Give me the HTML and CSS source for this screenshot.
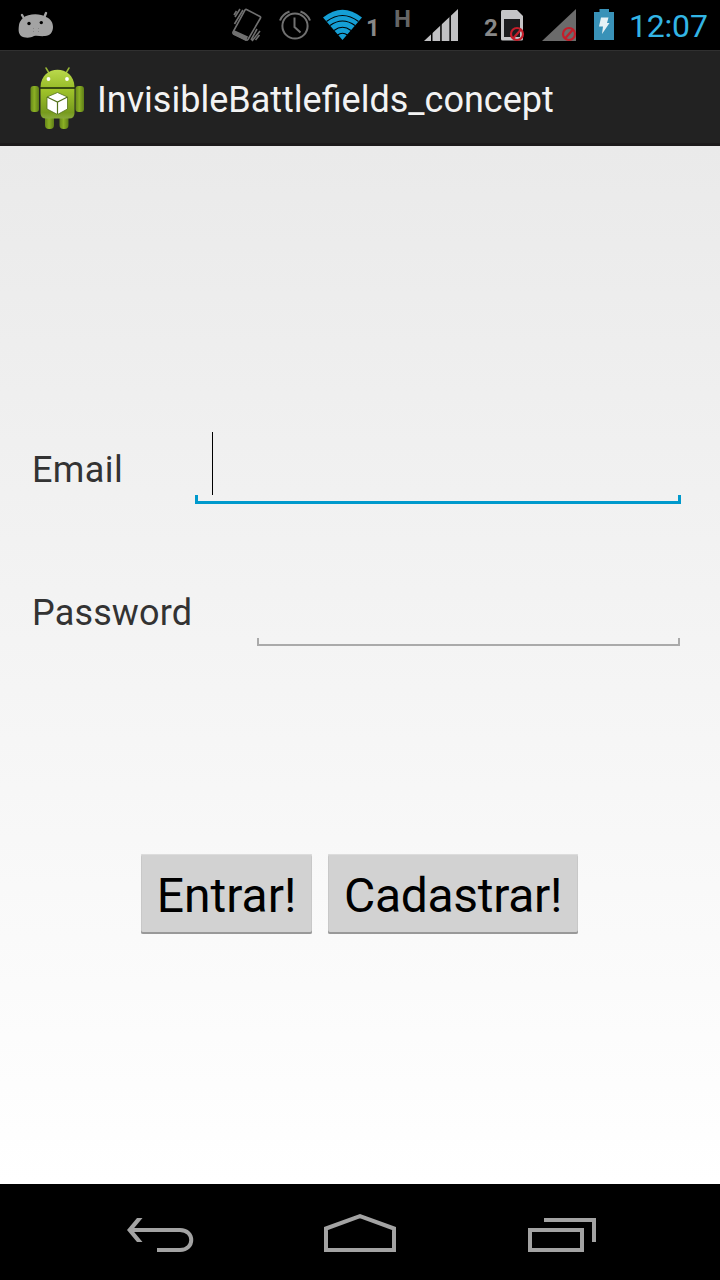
FILE: index.html
```html
<!DOCTYPE html>
<html lang="pt">
<head>
<meta charset="utf-8">
<title>InvisibleBattlefields_concept</title>
<link rel="stylesheet" href="styles.css">
</head>
<body>
<div class="screen">
  <header class="status-bar">
    <svg class="notification" width="38" height="50" viewBox="17 0 38 50">
      <path d="M22 15l3 5M46 13l-2 5" stroke="#a3a3a3" stroke-width="2.400" stroke-linecap="round"/>
      <path fill="#a3a3a3" d="M23 18c5-4.500 17-5 23-1c5 2 7 6 7 10c0 5-3 9-8 9c-4 .5-7-.5-11 0c-4 2.500-10 2-13 0c-3-3-2.500-7-2-11c.3-3 2-5 4-7z"/>
      <circle cx="29" cy="23.500" r="1.700"/><circle cx="41.300" cy="22.600" r="1.700"/>
      <path d="M33 28.500h1M38 28.500h1M33 31.500h1M38 31.500h1" stroke="#858585"/>
    </svg>
    <svg class="vibrate" width="30" height="50" viewBox="232 0 30 50" fill="none" stroke="#707070" stroke-width="1.600">
      <path d="M246.500 9.500L260 16.500Q261 17 260.500 18L248 39.500Q247.500 40.500 246.500 40L233.500 34Q232.600 33 233 32L245 10Q245.700 9.200 246.500 9.500z"/>
      <path d="M234 31l13 6l-1.500 3L234 34z" fill="#707070"/>
      <path d="M240 9l-5 8M243 10l-8.500 14M236.500 11l-2.500 4M260 31l-8 10M259.500 35l-4 5M257 29l-6 11"/>
    </svg>
    <svg class="alarm" width="32" height="50" viewBox="279 0 32 50" fill="none" stroke="#707070" stroke-width="2">
      <circle cx="295" cy="26" r="12.600"/>
      <path d="M294.500 17.500V27l6 5.500M280 20.500Q282 14.500 289.500 11.500M310 20.500Q308 14.500 300.500 11.500"/>
    </svg>
    <svg class="wifi" width="40" height="50" viewBox="323 0 40 50">
      <path fill="#159fd5" d="M323 17.500Q342.500 2 362 17.500L342.500 40z"/>
      <g fill="none" stroke="#000" stroke-width="1.100"><path d="M326.500 21.500q16-12 32 0M330 25.500q12.500-9 25 0M334 30.500q8.500-6.500 17 0M337.500 35q5-3.500 10 0"/></g>
    </svg>
    <span class="slot">1</span>
    <span class="network">H</span>
    <svg class="signal" width="35" height="50" viewBox="424 0 35 50">
      <path fill="#c1c1c3" d="M424 41L458 9V41z"/>
      <path fill="#000" d="M431 9h1.500v33H431zM440.200 9h1.500v33h-1.500zM449.400 9h1.500v33h-1.500z"/>
    </svg>
    <span class="slot slot-two">2</span>
    <svg class="sim" width="24" height="50" viewBox="501 0 24 50">
      <path fill="#c5c5c7" d="M502.500 10H517l6 6v23q0 1.500-1.500 1.500h-19q-1.500 0-1.500-1.500V11.500q0-1.500 1.500-1.500z"/>
      <path fill="#1d1d1f" d="M504 19h16v18h-16z"/>
      <g fill="none" stroke="#c51d2a" stroke-width="2.200"><circle cx="517" cy="34" r="6"/><path d="M513 38.500l8-9"/></g>
    </svg>
    <svg class="no-signal" width="35" height="50" viewBox="542 0 35 50">
      <path fill="#6b6b6b" d="M542 41L576 9V41z"/>
      <g fill="none" stroke="#c51d2a" stroke-width="2.200"><circle cx="569" cy="34" r="6"/><path d="M565 38.500l8-9"/></g>
    </svg>
    <svg class="battery" width="20" height="50" viewBox="594 0 20 50">
      <path fill="#3992b8" d="M594 12h5.500V9h9.500v3h5v28h-20z"/>
      <path fill="#e7f2f6" d="M601 17.500h7.500l-1.500 5.500h2.500L602 34l1-7.500h-4z"/>
    </svg>
    <time class="clock">12:07</time>
  </header>

  <div class="action-bar">
    <svg class="app-icon" width="56" height="64" viewBox="29 66 56 64">
      <defs>
        <linearGradient id="body" x2="0" y2="1"><stop stop-color="#a1c52b"/><stop offset=".8" stop-color="#779b1d"/><stop offset="1" stop-color="#89a93c"/></linearGradient>
        <linearGradient id="limb"><stop stop-color="#668719"/><stop offset=".45" stop-color="#8bb024"/><stop offset="1" stop-color="#5e7d17"/></linearGradient>
        <linearGradient id="head" x2="0" y2="1"><stop stop-color="#bad94c"/><stop offset="1" stop-color="#9abf2b"/></linearGradient>
      </defs>
      <path d="M46 68l3 5M69 68l-3 5" stroke="#98b736" stroke-width="1.500" stroke-linecap="round"/>
      <g fill="url(#limb)"><rect x="30.500" y="86" width="8.500" height="26" rx="3"/><rect x="75.500" y="86" width="8.500" height="26" rx="3"/><rect x="45" y="110" width="9" height="19" rx="4"/><rect x="59.500" y="110" width="9" height="19" rx="4"/></g>
      <path fill="url(#head)" d="M40.500 87C41 64 74 64 74.500 87z"/>
      <path fill="url(#body)" d="M40.500 89h34v24q0 5.500-5.500 5.500H46q-5.500 0-5.500-5.500z"/>
      <path d="M40.500 88h34" stroke="#40580e" stroke-width="1.400"/>
      <circle cx="48.500" cy="79" r="1.900" fill="#fff"/><circle cx="67" cy="79" r="1.900" fill="#fff"/>
      <path fill="#fff" stroke="#53711a" stroke-width=".8" d="M57.500 92.500l10 4.500v12l-10 5.500l-10.500-5.500V97z"/>
      <path fill="none" stroke="#53711a" stroke-width="1.200" d="M47 97l10.500 5l10-5M57.500 102v12"/>
    </svg>
    <h1 class="title">InvisibleBattlefields_concept</h1>
  </div>

  <main class="content">
    <div class="row">
      <label class="label email">Email</label>
      <div class="field focused"><span class="cursor"></span><span class="underline"></span></div>
    </div>
    <div class="row">
      <label class="label secret">Password</label>
      <div class="field password"><span class="underline"></span></div>
    </div>
    <div class="actions">
      <button class="button enter">Entrar!</button>
      <button class="button register">Cadastrar!</button>
    </div>
  </main>

  <nav class="nav-bar">
    <svg width="68" height="96" viewBox="126 1184 68 96" fill="none" stroke="#a3a3a3" stroke-width="4"><path d="M130 1230H180C195 1230 195 1250 180 1250H157"/><path d="M142.500 1218h-5.500L127 1230l10 12h5.500L132.500 1230z" fill="#a3a3a3" stroke="none"/></svg>
    <svg width="72" height="96" viewBox="324 1184 72 96" fill="none" stroke="#a3a3a3" stroke-width="4"><path d="M326 1250V1228.500L360 1216.200L394 1228.500V1250z"/></svg>
    <svg width="68" height="96" viewBox="528 1184 68 96" fill="none" stroke="#a3a3a3" stroke-width="4"><path d="M530 1230h52v20h-52zM544 1220h50v22"/></svg>
  </nav>
</div>
</body>
</html>
```
FILE: styles.css
```css
* { box-sizing: border-box; }
body { margin: 0; font-family: Roboto, "Noto Sans", sans-serif; }
svg { display: block; flex: none; }
.screen { width: 720px; height: 1280px; display: flex; flex-direction: column; background: #000; overflow: hidden; }

.status-bar { height: 50px; flex: none; display: flex; background: #000; }
.notification { margin-left: 17px; }
.vibrate { margin-left: 177px; }
.alarm { margin-left: 17px; }
.wifi { margin-left: 12px; }
.slot { width: 14px; margin-left: 3px; padding-top: 14px; font-size: 24px; line-height: 28px; font-weight: 700; color: #888; }
.network { width: 18px; margin-left: 14px; padding-top: 5px; font-size: 24px; line-height: 28px; font-weight: 700; color: #666; }
.signal { margin-left: 12px; }
.slot-two { margin-left: 25px; }
.sim { margin-left: 3px; }
.no-signal { margin-left: 17px; }
.battery { margin-left: 17px; }
.clock { margin-left: 15px; padding-top: 7px; font-size: 32px; line-height: 38px; letter-spacing: -0.2px; color: #33b5e5; white-space: nowrap; }

.action-bar { height: 96px; flex: none; display: flex; padding: 15px 0 0 29px; background: #222; border-top: 1px solid #303030; border-bottom: 3px solid #1c1a1b; }
.title { margin: 0 0 0 12px; padding-top: 13px; font-size: 36px; line-height: 42px; font-weight: 400; color: #f3f3f3; white-space: nowrap; }

.content { height: 1038px; flex: none; padding: 286px 39px 0 32px; background: linear-gradient(#eaeaea, #fff); }
.row { display: flex; justify-content: space-between; height: 72px; margin-bottom: 70px; }
.label { padding-top: 17px; font-size: 36px; line-height: 42px; color: #333; }
.email { letter-spacing: 0.4px; }
.secret { padding-top: 18px; letter-spacing: 0.15px; }
.field { display: flex; flex-direction: column; justify-content: flex-end; width: 486px; }
.cursor { width: 1px; height: 63px; margin-left: 17px; background: #000; }
.underline { height: 9px; border-bottom: 3px solid #0099cc; background: linear-gradient(#0099cc, #0099cc) left / 3px 100% no-repeat, linear-gradient(#0099cc, #0099cc) right / 3px 100% no-repeat; }
.password { width: 423px; margin-right: 1px; }
.password .underline { height: 8px; border-bottom: 2px solid #aaa; background: linear-gradient(#aaa, #aaa) left / 2px 100% no-repeat, linear-gradient(#aaa, #aaa) right / 2px 100% no-repeat; }

.actions { display: flex; gap: 16px; margin: 208px 0 0 109px; }
.button { height: 80px; padding: 4px 0 0; border: 0; border-radius: 2px; background: #d2d2d2; box-shadow: inset 0 -2px 0 #999, inset 0 1px 0 #ddd, inset 1px 0 #c8c8c8, inset -1px 0 #c8c8c8; font: 400 48px/56px Roboto, "Noto Sans", sans-serif; color: #000; white-space: nowrap; }
.enter { width: 171px; }
.register { width: 250px; letter-spacing: -0.3px; }

.nav-bar { height: 96px; flex: none; display: flex; gap: 130px; padding-left: 126px; background: #000; }
.nav-bar svg:last-child { margin-left: 2px; }
```
